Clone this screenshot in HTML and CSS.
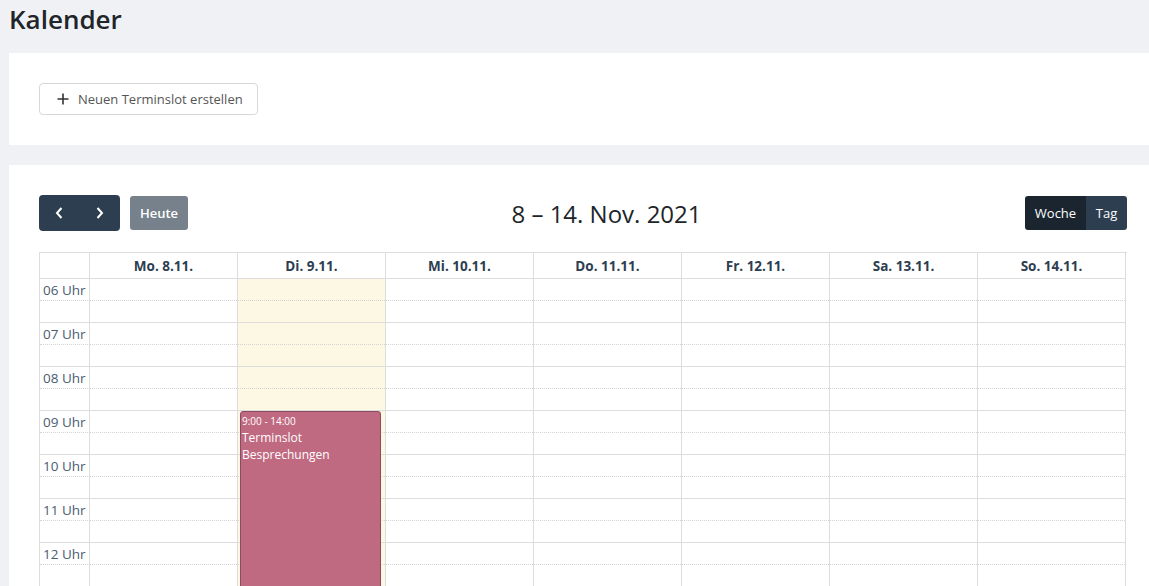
FILE: index.html
```html
<!DOCTYPE html>
<html lang="de">
<head>
<meta charset="utf-8">
<title>Kalender</title>
<link rel="stylesheet" href="styles.css">
</head>
<body>
<main class="page">
  <h1 class="page-title">Kalender</h1>

  <section class="card card-actions">
    <button class="btn-outline" type="button">
      <svg class="plus" width="12" height="12" viewBox="0 0 12 12" aria-hidden="true"><path d="M6 0.5v11M0.5 6h11" stroke="#333" stroke-width="1.6" fill="none"/></svg>
      <span>Neuen Terminslot erstellen</span>
    </button>
  </section>

  <section class="card card-calendar">
    <div class="toolbar">
      <div class="toolbar-left">
        <div class="btn-group nav-group">
          <button class="btn btn-primary nav-btn" type="button" aria-label="zurück">
            <svg width="8" height="12" viewBox="0 0 8 12"><path d="M6.5 1 L2 6 L6.5 11" stroke="#fff" stroke-width="2" fill="none"/></svg>
          </button>
          <button class="btn btn-primary nav-btn" type="button" aria-label="weiter">
            <svg width="8" height="12" viewBox="0 0 8 12"><path d="M1.5 1 L6 6 L1.5 11" stroke="#fff" stroke-width="2" fill="none"/></svg>
          </button>
        </div>
        <button class="btn btn-today" type="button">Heute</button>
      </div>
      <h2 class="cal-title">8 – 14. Nov. 2021</h2>
      <div class="toolbar-right">
        <div class="btn-group view-group">
          <button class="btn btn-view active" type="button">Woche</button>
          <button class="btn btn-view tag" type="button">Tag</button>
        </div>
      </div>
    </div>

    <div class="cal">
      <div class="cal-head">
        <div class="head-cell axis"></div>
        <div class="head-cell">Mo. 8.11.</div>
        <div class="head-cell">Di. 9.11.</div>
        <div class="head-cell">Mi. 10.11.</div>
        <div class="head-cell">Do. 11.11.</div>
        <div class="head-cell">Fr. 12.11.</div>
        <div class="head-cell">Sa. 13.11.</div>
        <div class="head-cell">So. 14.11.</div>
      </div>
      <div class="cal-body">
        <div class="col axis-col">
          <div class="hour"><span>06 Uhr</span></div>
          <div class="hour"><span>07 Uhr</span></div>
          <div class="hour"><span>08 Uhr</span></div>
          <div class="hour"><span>09 Uhr</span></div>
          <div class="hour"><span>10 Uhr</span></div>
          <div class="hour"><span>11 Uhr</span></div>
          <div class="hour"><span>12 Uhr</span></div>
          <div class="hour"></div>
        </div>
        <div class="col day"><div class="hour"></div><div class="hour"></div><div class="hour"></div><div class="hour"></div><div class="hour"></div><div class="hour"></div><div class="hour"></div><div class="hour"></div></div>
        <div class="col day today">
          <div class="hour"></div><div class="hour"></div><div class="hour"></div><div class="hour"></div><div class="hour"></div><div class="hour"></div><div class="hour"></div><div class="hour"></div>
          <div class="event">
            <div class="event-time">9:00 - 14:00</div>
            <div class="event-title">Terminslot<br>Besprechungen</div>
          </div>
        </div>
        <div class="col day"><div class="hour"></div><div class="hour"></div><div class="hour"></div><div class="hour"></div><div class="hour"></div><div class="hour"></div><div class="hour"></div><div class="hour"></div></div>
        <div class="col day"><div class="hour"></div><div class="hour"></div><div class="hour"></div><div class="hour"></div><div class="hour"></div><div class="hour"></div><div class="hour"></div><div class="hour"></div></div>
        <div class="col day"><div class="hour"></div><div class="hour"></div><div class="hour"></div><div class="hour"></div><div class="hour"></div><div class="hour"></div><div class="hour"></div><div class="hour"></div></div>
        <div class="col day"><div class="hour"></div><div class="hour"></div><div class="hour"></div><div class="hour"></div><div class="hour"></div><div class="hour"></div><div class="hour"></div><div class="hour"></div></div>
        <div class="col day"><div class="hour"></div><div class="hour"></div><div class="hour"></div><div class="hour"></div><div class="hour"></div><div class="hour"></div><div class="hour"></div><div class="hour"></div></div>
      </div>
    </div>
  </section>
</main>
</body>
</html>
```

FILE: styles.css
```css
html, body {
  margin: 0;
  padding: 0;
  overflow: hidden;
}
body {
  background: #f0f1f5;
  font-family: "Open Sans", "Noto Sans", "Liberation Sans", sans-serif;
  color: #212529;
}
.page {
  padding: 0 0 0 9px;
}
.page-title {
  margin: 0;
  height: 53px;
  padding-top: 2px;
  box-sizing: border-box;
  font-size: 26px;
  line-height: 34px;
  font-weight: 600;
  color: #212529;
}
.card {
  background: #fff;
  padding: 30px 22px 30px 30px;
}
.card-actions {
  height: 92px;
  box-sizing: border-box;
  margin-bottom: 20px;
}
.btn-outline {
  display: inline-flex;
  align-items: center;
  gap: 9px;
  height: 32px;
  padding: 0 14px 0 17px;
  background: #fff;
  border: 1px solid #d8d8d8;
  border-radius: 4px;
  font-family: inherit;
  font-size: 13px;
  color: #555;
  box-sizing: border-box;
}
.plus { display: block; }

.toolbar {
  display: flex;
  align-items: center;
  justify-content: space-between;
  height: 36px;
  margin-bottom: 21px;
  width: 1088px;
}
.toolbar-left, .toolbar-right {
  display: flex;
  align-items: center;
  gap: 10px;
}
.btn-group { display: flex; }
.btn {
  border: 0;
  font-family: inherit;
  color: #fff;
  font-size: 13px;
  font-weight: 600;
  display: flex;
  align-items: center;
  justify-content: center;
  padding: 0;
}
.nav-group {
  border-radius: 4px;
  overflow: hidden;
}
.nav-btn {
  width: 40.5px;
  height: 36px;
  background: #2c3e50;
}
.btn-today {
  width: 58px;
  height: 34px;
  background: #77818c;
  border-radius: 3px;
}
.cal-title {
  margin: 0;
  font-size: 24px;
  font-weight: 400;
  color: #212529;
}
.view-group {
  border-radius: 3px;
  overflow: hidden;
}
.btn-view {
  height: 34px;
  background: #2c3e50;
  font-weight: 500;
}
.btn-view.active {
  background: #1a252f;
  width: 61px;
}
.btn-view.tag { width: 41px; }

.cal {
  border-left: 1px solid #ddd;
  border-top: 1px solid #ddd;
  width: 1088px;
  box-sizing: border-box;
}
.cal-head, .cal-body {
  display: grid;
  grid-template-columns: 50px repeat(7, 148px);
}
.head-cell {
  height: 26px;
  box-sizing: border-box;
  border-right: 1px solid #ddd;
  border-bottom: 1px solid #ddd;
  display: flex;
  align-items: center;
  justify-content: center;
  font-size: 13.5px;
  font-weight: 700;
  color: #2c3e50;
}
.col {
  border-right: 1px solid #ddd;
  position: relative;
}
.today { background: #fcf8e3; }
.hour {
  height: 44px;
  box-sizing: border-box;
  border-bottom: 1px solid #ddd;
  position: relative;
}
.hour::after {
  content: "";
  position: absolute;
  left: 0;
  right: 0;
  top: 21px;
  border-top: 1px dotted #d4d4d4;
}
.axis-col .hour span {
  display: block;
  font-size: 13.5px;
  line-height: 22px;
  padding-left: 3px;
  color: #4a5c70;
}
.axis-col .hour::after { right: -1px; }
.event {
  position: absolute;
  top: 132px;
  left: 2px;
  right: 4px;
  height: 220px;
  background: #c06a82;
  border: 1px solid #8b4a5d;
  border-radius: 3px;
  color: #fff;
  padding: 2px 1px;
  box-sizing: border-box;
  z-index: 2;
}
.event-time {
  font-size: 10px;
  line-height: 14px;
}
.event-title {
  font-size: 12px;
  line-height: 17px;
  margin-top: 1px;
}
```
